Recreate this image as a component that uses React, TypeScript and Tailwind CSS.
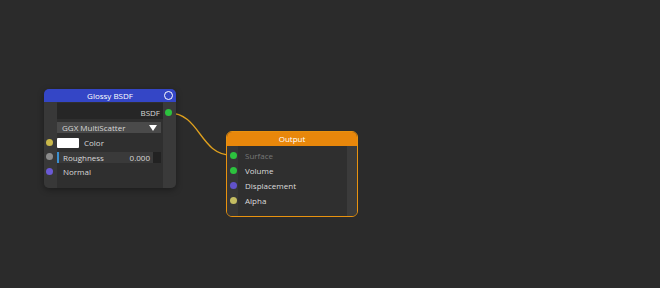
import React from 'react';

const font = { fontFamily: '"Open Sans", "Noto Sans", sans-serif' };

const Dot = ({ color, className = '' }: { color: string; className?: string }) => (
  <span className={`absolute w-[7px] h-[7px] rounded-full ${color} ${className}`} />
);

const GlossyNode = () => (
  <div className="absolute left-[44px] top-[89px] w-[132px] h-[99px] rounded-[5px] bg-[#2f2f2f] flex flex-col shadow-[0_2px_6px_rgba(0,0,0,0.35)]">
    <div className="relative h-[13px] rounded-t-[5px] bg-[#3446c6] flex items-center justify-center text-[8px] leading-none text-white">
      Glossy BSDF
      <span className="absolute left-[120px] top-[2px] w-[9px] h-[9px] rounded-full border-[1.5px] border-white" />
    </div>
    <div className="flex flex-1">
      <div className="w-[13px] bg-[#383838] rounded-bl-[5px]" />
      <div className="flex-1 flex flex-col text-[8px] leading-none text-[#d8d8d8]">
        <div className="h-[16px] mt-px bg-[#262626] flex items-center justify-end pr-[3px] pt-[3px]">BSDF</div>
        <div className="h-[11px] mt-[3px] mr-[2px] bg-[#4a4a4a] flex items-center justify-between pl-[5px] pr-[4px]">
          <span>GGX MultiScatter</span>
          <span className="w-0 h-0 border-l-[4px] border-r-[4px] border-t-[6px] border-l-transparent border-r-transparent border-t-white" />
        </div>
        <div className="h-[10px] mt-[5px] flex items-center">
          <span className="w-[22px] h-[10px] bg-white rounded-[1px]" />
          <span className="ml-[5px]">Color</span>
        </div>
        <div className="h-[11px] mt-[4px] flex items-center">
          <div className="flex-1 h-full bg-[#3a3a3a] border-l-2 border-[#3a8fd0] flex items-center justify-between pl-[4px] pr-[3px]">
            <span>Roughness</span>
            <span>0.000</span>
          </div>
          <span className="w-[8px] h-full bg-[#222222]" />
          <span className="w-[2px]" />
        </div>
        <div className="h-[10px] mt-[4px] flex items-center pl-[6px]">Normal</div>
      </div>
      <div className="w-[13px] bg-[#3a3a3a] rounded-br-[5px]" />
    </div>
    <Dot color="bg-[#2cc23e]" className="left-[121px] top-[20px]" />
    <Dot color="bg-[#c9b84a]" className="left-[2px] top-[50px]" />
    <Dot color="bg-[#8c8c8c]" className="left-[2px] top-[64px]" />
    <Dot color="bg-[#6b5ad6]" className="left-[2px] top-[79px]" />
  </div>
);

const OutputNode = () => (
  <div className="absolute left-[226px] top-[131px] w-[132px] h-[86px] rounded-[6px] border-[1.5px] border-[#e8920f] bg-[#2f2f2f] flex flex-col overflow-hidden">
    <div className="h-[14px] bg-[#e8870b] flex items-center justify-center text-[8px] leading-none text-white">Output</div>
    <div className="flex flex-1">
      <div className="w-[11px] bg-[#363636]" />
      <div className="flex-1 flex flex-col pt-[2px] pl-[7px] text-[8px] leading-none text-[#dcdcdc]">
        <div className="h-[15px] flex items-center text-[#777777]">Surface</div>
        <div className="h-[15px] flex items-center">Volume</div>
        <div className="h-[15px] flex items-center">Displacement</div>
        <div className="h-[15px] flex items-center">Alpha</div>
      </div>
      <div className="w-[10px] bg-[#3b3b3b]" />
    </div>
    <Dot color="bg-[#2cc23e]" className="left-[3px] top-[20px]" />
    <Dot color="bg-[#2cc23e]" className="left-[3px] top-[35px]" />
    <Dot color="bg-[#6152c9]" className="left-[3px] top-[50px]" />
    <Dot color="bg-[#c4bd62]" className="left-[3px] top-[65px]" />
  </div>
);

export default function App() {
  return (
    <div className="relative w-[660px] h-[288px] bg-[#2b2b2b] overflow-hidden" style={font}>
      <svg className="absolute inset-0" width="660" height="288">
        <path d="M169 113 C 200 113, 200 155, 231 155" fill="none" stroke="#e0a11e" strokeWidth="1.3" />
      </svg>
      <GlossyNode />
      <OutputNode />
    </div>
  );
}
